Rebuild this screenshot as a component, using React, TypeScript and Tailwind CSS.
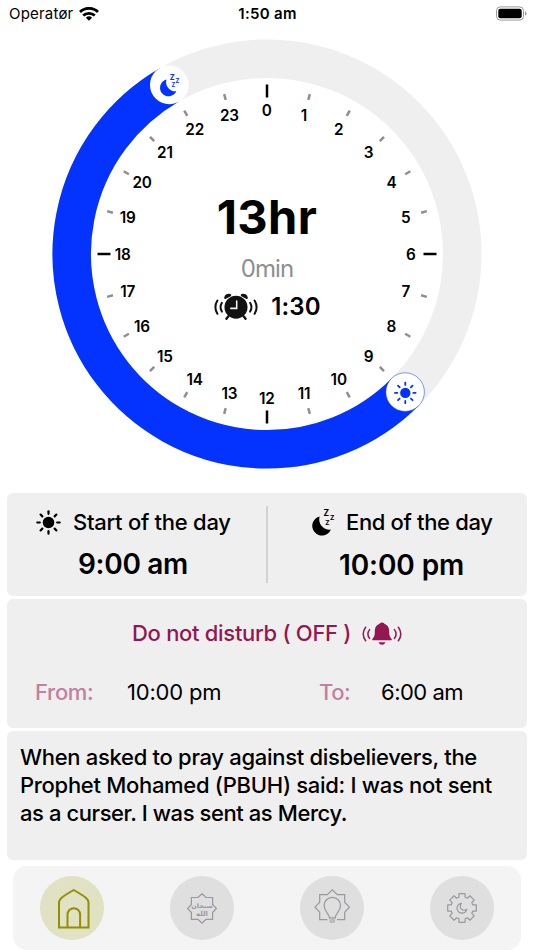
import type { ReactNode } from "react"

const BLUE = "#0433ff"
const CX = 267
const CY = 226
const RING_RADIUS = 195.3

// Point on the 24h dial, hour 0 is at the top
function polar(hour: number, radius: number) {
  const angle = (hour / 24) * Math.PI * 2
  return { x: CX + Math.sin(angle) * radius, y: CY - Math.cos(angle) * radius }
}

function SunShape({ core = 5.8, inner = 8.7, outer = 11.2, width = 2.2 }: { core?: number; inner?: number; outer?: number; width?: number }) {
  return (
    <g stroke="currentColor" strokeWidth={width} strokeLinecap="round">
      <circle r={core} fill="currentColor" stroke="none" />
      {[0, 45, 90, 135, 180, 225, 270, 315].map((deg) => (
        <line key={deg} y1={-inner} y2={-outer} transform={`rotate(${deg})`} />
      ))}
    </g>
  )
}

function MoonShape() {
  return (
    <g fill="currentColor" fontFamily="Inter, sans-serif" fontWeight="700">
      <path d="M7.7 6.4 A9.7 9.7 0 1 0 18.9 19.6 A10.2 10.2 0 0 1 7.7 6.4 Z" />
      <text x="11.4" y="6.4" fontSize="8.4">Z</text>
      <text x="18" y="10.4" fontSize="6.6">Z</text>
      <text x="13.3" y="14.5" fontSize="6.4">Z</text>
    </g>
  )
}

function StatusBar() {
  return (
    <div className="grid h-[27px] grid-cols-3 items-center pl-[9px] pr-[7px] text-[15px] leading-none">
      <div className="flex items-center gap-[6px]">
        <span className="tracking-[0.2px]">Operatør</span>
        <svg width="20" height="14" viewBox="0 0 20 14" fill="none" stroke="#000" strokeWidth="2.8">
          <path d="M1 5 A13 13 0 0 1 19 5" />
          <path d="M4.2 8.6 A8.4 8.4 0 0 1 15.8 8.6" />
          <path d="M10 13.8 L6.9 10.8 A4.5 4.5 0 0 1 13.1 10.8 Z" fill="#000" stroke="none" />
        </svg>
      </div>
      <span className="-ml-px text-center font-semibold tracking-[0.3px]">1:50 am</span>
      <svg className="justify-self-end" width="31" height="15" viewBox="0 0 31 15">
        <rect x="0.5" y="0.9" width="27" height="13.2" rx="3.8" fill="none" stroke="#999" />
        <rect x="2.3" y="2.7" width="23.4" height="9.6" rx="2" />
        <path d="M29 5.3 Q30.6 6 30.6 7.5 Q30.6 9 29 9.7 Z" fill="#999" />
      </svg>
    </div>
  )
}

function AlarmIcon() {
  return (
    <svg width="44" height="28" viewBox="-22 -15 44 28" fill="none" stroke="#111" strokeLinecap="round">
      <circle cy="-0.8" r="11.5" fill="#111" stroke="none" />
      <path d="M-10.6 -10.2 A3.4 3.4 0 0 1 -6 -12.8 Z M10.6 -10.2 A3.4 3.4 0 0 0 6 -12.8 Z" fill="#111" strokeWidth="2.4" strokeLinejoin="round" />
      <path d="M-7.6 8.2 L-9.6 10.8 M7.6 8.2 L9.6 10.8" strokeWidth="2.3" />
      <path d="M0.7 -7 V0.4 H-5.2" stroke="#efefef" strokeWidth="1.6" />
      <path d="M-14.1 -5.2 Q-16.8 -0.8 -14.1 3.6 M14.1 -5.2 Q16.8 -0.8 14.1 3.6" strokeWidth="2" />
      <path d="M-18.6 -7.4 Q-22.6 -0.8 -18.6 5.8 M18.6 -7.4 Q22.6 -0.8 18.6 5.8" strokeWidth="2" />
    </svg>
  )
}

function BellIcon() {
  return (
    <svg width="40" height="24" viewBox="-20 -12 40 24" fill="none" stroke="#941751" strokeLinecap="round">
      <path
        d="M0 -11.6 C1.7 -11.6 2.3 -10.8 2.6 -9.9 C6.2 -8.8 7.2 -5.7 7.2 -2 C7.2 2 8.2 3.3 9.6 4.9 Q10.4 6.3 9 6.3 H-9 Q-10.4 6.3 -9.6 4.9 C-8.2 3.3 -7.2 2 -7.2 -2 C-7.2 -5.7 -6.2 -8.8 -2.6 -9.9 C-2.3 -10.8 -1.7 -11.6 0 -11.6 Z M-3.5 8.2 H3.5 Q2.5 10.8 0 10.8 Q-2.5 10.8 -3.5 8.2 Z"
        fill="#941751"
        stroke="none"
      />
      <path d="M-12.4 -4.4 Q-15.8 0 -12.4 4.4 M12.4 -4.4 Q15.8 0 12.4 4.4" strokeWidth="1.5" />
      <path d="M-16.4 -6.8 Q-21.2 0 -16.4 6.8 M16.4 -6.8 Q21.2 0 16.4 6.8" strokeWidth="1.5" />
    </svg>
  )
}

function Dial() {
  const sleep = polar(22, RING_RADIUS)
  const wake = polar(9, RING_RADIUS)

  return (
    <div className="relative h-[465px] pt-px">
      <svg className="block" width="534" height="464" viewBox="0 0 534 464">
        <circle cx={CX} cy={CY} r={RING_RADIUS} fill="none" stroke="#efefef" strokeWidth="38.5" />
        <path
          d={`M${wake.x} ${wake.y} A${RING_RADIUS} ${RING_RADIUS} 0 1 1 ${sleep.x} ${sleep.y}`}
          fill="none"
          stroke={BLUE}
          strokeWidth="38.5"
        />
        {Array.from({ length: 24 }, (_, hour) => {
          const major = hour % 6 === 0
          const from = polar(hour, major ? 156.5 : 159.5)
          const to = polar(hour, major ? 169.5 : 165.5)
          const label = polar(hour, 144)
          return (
            <g key={hour}>
              <line x1={from.x} y1={from.y} x2={to.x} y2={to.y} stroke={major ? "#000" : "#8e8e93"} strokeWidth="2.5" />
              <text x={label.x - 0.3} y={label.y + 5.8} textAnchor="middle" fontSize="15.3" fontWeight="600" letterSpacing="-0.2">
                {hour}
              </text>
            </g>
          )
        })}
        <circle cx={sleep.x} cy={sleep.y} r="19.4" fill="#fff" />
        <g transform={`translate(${sleep.x - 9.6} ${sleep.y - 11}) scale(0.88)`} color={BLUE}>
          <MoonShape />
        </g>
        <circle cx={wake.x} cy={wake.y} r="19.3" fill="#fff" stroke={BLUE} strokeWidth="0.5" />
        <g transform={`translate(${wake.x + 0.2} ${wake.y + 0.8})`} color={BLUE}>
          <SunShape core={5.2} inner={8} outer={10.3} width={1.8} />
        </g>
      </svg>
      <div className="absolute inset-x-0 top-[161px] flex flex-col items-center">
        <span className="h-[58px] text-[47px] font-bold leading-[58px] tracking-[0.4px]">13hr</span>
        <span className="mt-[8px] text-[24px] font-normal leading-[30px] tracking-[-0.9px] text-[#8e8e93]">0min</span>
        <div className="mt-[9px] flex items-center gap-[13px] pl-px text-[24px] font-semibold leading-[28px]">
          <AlarmIcon />
          <span className="tracking-[0.2px]">1:30</span>
        </div>
      </div>
    </div>
  )
}

function NavButton({ active, children }: { active?: boolean; children: ReactNode }) {
  return (
    <button className={`flex size-16 items-center justify-center rounded-full ${active ? "bg-[#e1e1c4]" : "bg-[#dfdfdf]"}`}>
      <svg width="64" height="64" viewBox="-32 -32 64 64" fill="none" stroke={active ? "#929000" : "#98989d"} strokeWidth={active ? 2 : 1.2}>
        {children}
      </svg>
    </button>
  )
}

// Eight teeth with rounded shoulders
function gearPath() {
  const points: string[] = []
  for (let i = 0; i < 8; i++) {
    const offsets: [number, number][] = [[-16, 11.2], [-12, 14.6], [12, 14.6], [16, 11.2]]
    offsets.forEach(([deg, r]) => {
      const a = ((i * 45 + deg) * Math.PI) / 180
      points.push(`${(Math.sin(a) * r).toFixed(2)} ${(-Math.cos(a) * r).toFixed(2)}`)
    })
  }
  return `M${points.join("L")}Z`
}

function BottomNav() {
  return (
    <nav className="mx-[13px] mt-[6.5px] flex h-[84px] items-center justify-between rounded-[14px] bg-[#f4f4f4] px-[27px]">
      <NavButton active>
        <path d="M-13 19.5 V-5.5 Q-13 -7.8 -10.8 -9.8 Q-8 -12.4 1.7 -18 Q11.5 -12.4 14.3 -9.8 Q16.5 -7.8 16.5 -5.5 V19.5 Z" />
        <path d="M-4.5 19 V6.5 A6.3 6.3 0 0 1 8.1 6.5 V19" />
      </NavButton>
      <NavButton>
        <path d="M0 -14.2 L4 -10.5 H10.6 V-3.6 L14.4 0.5 L10.6 4.6 V11.3 H4 L0 15.2 L-4 11.3 H-10.6 V4.6 L-14.4 0.5 L-10.6 -3.6 V-10.5 H-4 Z" />
        <g fill="#98989d" stroke="none" fontFamily="'DejaVu Sans', sans-serif" fontWeight="700" textAnchor="middle">
          <text y="-0.5" fontSize="6.4">سبحان</text>
          <text y="7.5" fontSize="6.8">الله</text>
        </g>
      </NavButton>
      <NavButton>
        <path d="M-4.6 11.6 H-12.3 V4.2 L-17 -0.8 L-12.3 -5.8 V-13.3 H-4.7 L0.3 -18.2 L5.3 -13.3 H12.7 V-5.8 L17.4 -0.8 L12.7 4.2 V11.6 H5" />
        <path d="M-2.6 9.9 C-2.6 5.5 -7.9 3.8 -7.9 -2.5 A8.2 8.2 0 0 1 8.5 -2.5 C8.5 3.8 3.2 5.5 3.2 9.9 Z M-2.6 12 H3.2 M-2.3 14 H2.9" />
      </NavButton>
      <NavButton>
        <path d={gearPath()} strokeLinejoin="round" />
        <path d="M-0.5 -4.6 A4.9 4.9 0 1 0 4.8 1.2 A3.9 3.9 0 0 1 -0.5 -4.6 Z" strokeLinejoin="round" />
      </NavButton>
    </nav>
  )
}

export default function App() {
  return (
    <div className="flex h-[950px] w-[534px] flex-col overflow-hidden bg-white font-[Inter,sans-serif] text-black">
      <StatusBar />
      <Dial />

      <main className="mx-[7px] mt-[0.5px] flex flex-col gap-[3px]">
        <section className="flex h-[103px] rounded-md bg-[#efefef]">
          <div className="w-[259px] pt-[14px]">
            <div className="flex h-8 items-center pl-[29px]">
              <svg width="25" height="25" viewBox="-12.5 -12.5 25 25">
                <SunShape />
              </svg>
              <span className="ml-[12px] text-[22px] font-medium tracking-[-0.27px]">Start of the day</span>
            </div>
            <p className="mt-[7px] pl-[71px] text-[28px] font-semibold leading-9 tracking-[-0.3px]">9:00 am</p>
          </div>
          <div className="mt-[13px] h-[77px] w-[2px] bg-[#d2d2d4]" />
          <div className="pt-[14px]">
            <div className="flex h-8 items-center pl-[44px]">
              <svg width="24" height="34" viewBox="0 -4 24 34">
                <MoonShape />
              </svg>
              <span className="ml-[10px] text-[22px] font-medium tracking-[-0.35px]">End of the day</span>
            </div>
            <p className="mt-[8px] pl-[71px] text-[28px] font-semibold leading-9 tracking-[-0.1px]">10:00 pm</p>
          </div>
        </section>

        <section className="h-[129px] rounded-md bg-[#efefef] pt-[19px]">
          <div className="flex h-8 items-center pl-[125px] text-[22px] font-medium text-[#941751]">
            <span className="tracking-[-0.3px]">Do not disturb ( OFF )</span>
            <span className="ml-[11px]">
              <BellIcon />
            </span>
          </div>
          <div className="mt-[27px] flex h-8 items-center text-[22px]">
            <span className="w-[120px] pl-[28px] font-medium tracking-[-0.3px] text-[#c480a0]">From:</span>
            <span className="w-[192px] tracking-[-0.2px]">10:00 pm</span>
            <span className="w-[62px] font-medium tracking-[-0.5px] text-[#c480a0]">To:</span>
            <span className="tracking-[-0.5px]">6:00 am</span>
          </div>
        </section>

        <section className="h-[129px] rounded-md bg-[#efefef] px-[13px] pt-[12px]">
          <p className="text-[22px] font-medium leading-[28.4px] tracking-[-0.3px]">
            When asked to pray against disbelievers, the
            <br />
            Prophet Mohamed (PBUH) said: I was not sent
            <br />
            <span className="tracking-[-0.42px]">as a curser. I was sent as Mercy.</span>
          </p>
        </section>
      </main>

      <BottomNav />
    </div>
  )
}
